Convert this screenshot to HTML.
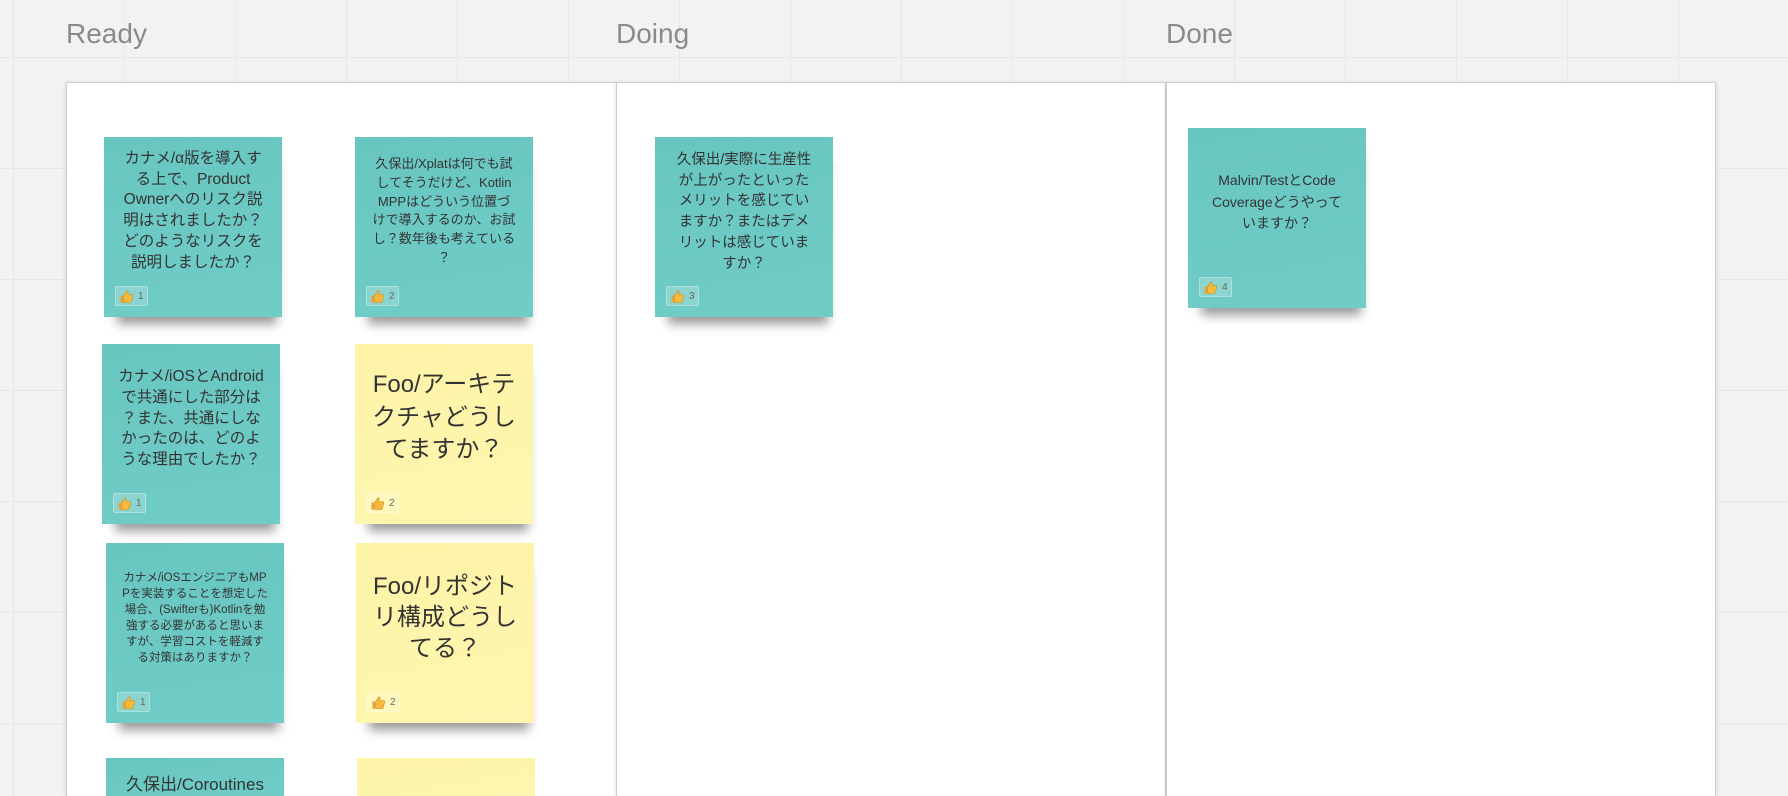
<!DOCTYPE html>
<html><head><meta charset="utf-8"><style>
*{margin:0;padding:0;box-sizing:border-box}
html,body{width:1788px;height:796px;overflow:hidden}
body{position:relative;background-color:#f2f2f2;
background-image:linear-gradient(to right,#e8e8e8 1px,transparent 1px),linear-gradient(to bottom,#e8e8e8 1px,transparent 1px);
background-size:111px 111px;background-position:13px 57px;
font-family:"Liberation Sans","Noto Sans CJK JP",sans-serif}
.h{position:absolute;top:18px;font-size:28px;color:#8a8a8a;font-family:"Liberation Sans",sans-serif}
.col{position:absolute;top:82px;height:714px;background:#fff;border:1px solid #cfcfcf;border-bottom:none;box-shadow:0 1px 4px rgba(0,0,0,.15)}
.s{position:absolute;width:178px;height:180px;background:linear-gradient(170deg,#68c6c0,#70ccc6);box-shadow:4px 16px 10px -9px rgba(0,0,0,.4)}
.s.y{background:linear-gradient(170deg,#fdf4a8,#fef6b0)}
.t{position:absolute;left:0;right:0;text-align:center;white-space:nowrap;color:#333}
.b{position:absolute;left:11px;bottom:11px;height:20px;padding:0 3px;display:flex;align-items:center;gap:4px;font-size:10px;color:#666;border-radius:2px;background:rgba(255,255,255,.2);border:1px solid rgba(255,255,255,.3)}
.b svg{width:15px;height:15px}
</style></head><body>
<div class="h" style="left:66px">Ready</div>
<div class="h" style="left:616px">Doing</div>
<div class="h" style="left:1166px">Done</div>
<div class="col" style="left:66px;width:551px"></div>
<div class="col" style="left:616px;width:550px"></div>
<div class="col" style="left:1166px;width:550px"></div>

<svg width="0" height="0" style="position:absolute"><defs><symbol id="th" viewBox="0 0 16 16"><path d="M5 7 L8 2.5 C9 1.5 10 2 9.8 3.2 L9.3 6 H13.5 C14.6 6 15 7 14.6 7.8 L13 13.5 C12.7 14.3 12 14.5 11 14.5 H5 Z" fill="#f6b93b" stroke="#c98a1a" stroke-width=".6"/><rect x="1.5" y="7" width="3" height="7.5" fill="#e8a33a"/></symbol></defs></svg>

<div class="s" style="left:104px;top:137px"><div class="t" style="top:12px;font-size:15.5px;line-height:20.7px">カナメ/α版を導入す<br>る上で、Product<br>Ownerへのリスク説<br>明はされましたか？<br>どのようなリスクを<br>説明しましたか？</div><div class="b"><svg><use href="#th"/></svg>1</div></div>

<div class="s" style="left:355px;top:137px"><div class="t" style="top:18px;font-size:13px;line-height:18.8px">久保出/Xplatは何でも試<br>してそうだけど、Kotlin<br>MPPはどういう位置づ<br>けで導入するのか、お試<br>し？数年後も考えている<br>？</div><div class="b"><svg><use href="#th"/></svg>2</div></div>

<div class="s" style="left:102px;top:344px"><div class="t" style="top:23px;font-size:15.5px;line-height:20.8px">カナメ/iOSとAndroid<br>で共通にした部分は<br>？また、共通にしな<br>かったのは、どのよ<br>うな理由でしたか？</div><div class="b"><svg><use href="#th"/></svg>1</div></div>

<div class="s y" style="left:355px;top:344px"><div class="t" style="top:25px;font-size:24px;line-height:32.5px">Foo/アーキテ<br>クチャどうし<br>てますか？</div><div class="b"><svg><use href="#th"/></svg>2</div></div>

<div class="s" style="left:106px;top:543px"><div class="t" style="top:27px;font-size:11.5px;line-height:16px">カナメ/iOSエンジニアもMP<br>Pを実装することを想定した<br>場合、(Swifterも)Kotlinを勉<br>強する必要があると思いま<br>すが、学習コストを軽減す<br>る対策はありますか？</div><div class="b"><svg><use href="#th"/></svg>1</div></div>

<div class="s y" style="left:356px;top:543px"><div class="t" style="top:28px;font-size:24px;line-height:31px">Foo/リポジト<br>リ構成どうし<br>てる？</div><div class="b"><svg><use href="#th"/></svg>2</div></div>

<div class="s" style="left:106px;top:758px;height:38px;box-shadow:none"><div class="t" style="top:15px;font-size:17px;line-height:24px;height:23px;overflow:hidden">久保出/Coroutines</div></div>
<div class="s y" style="left:357px;top:758px;height:38px;box-shadow:none"></div>

<div class="s" style="left:655px;top:137px"><div class="t" style="top:13px;font-size:14.5px;line-height:20.7px">久保出/実際に生産性<br>が上がったといった<br>メリットを感じてい<br>ますか？またはデメ<br>リットは感じていま<br>すか？</div><div class="b"><svg><use href="#th"/></svg>3</div></div>

<div class="s" style="left:1188px;top:128px"><div class="t" style="top:42px;font-size:14px;line-height:21.6px">Malvin/TestとCode<br>Coverageどうやって<br>いますか？</div><div class="b"><svg><use href="#th"/></svg>4</div></div>
</body></html>
